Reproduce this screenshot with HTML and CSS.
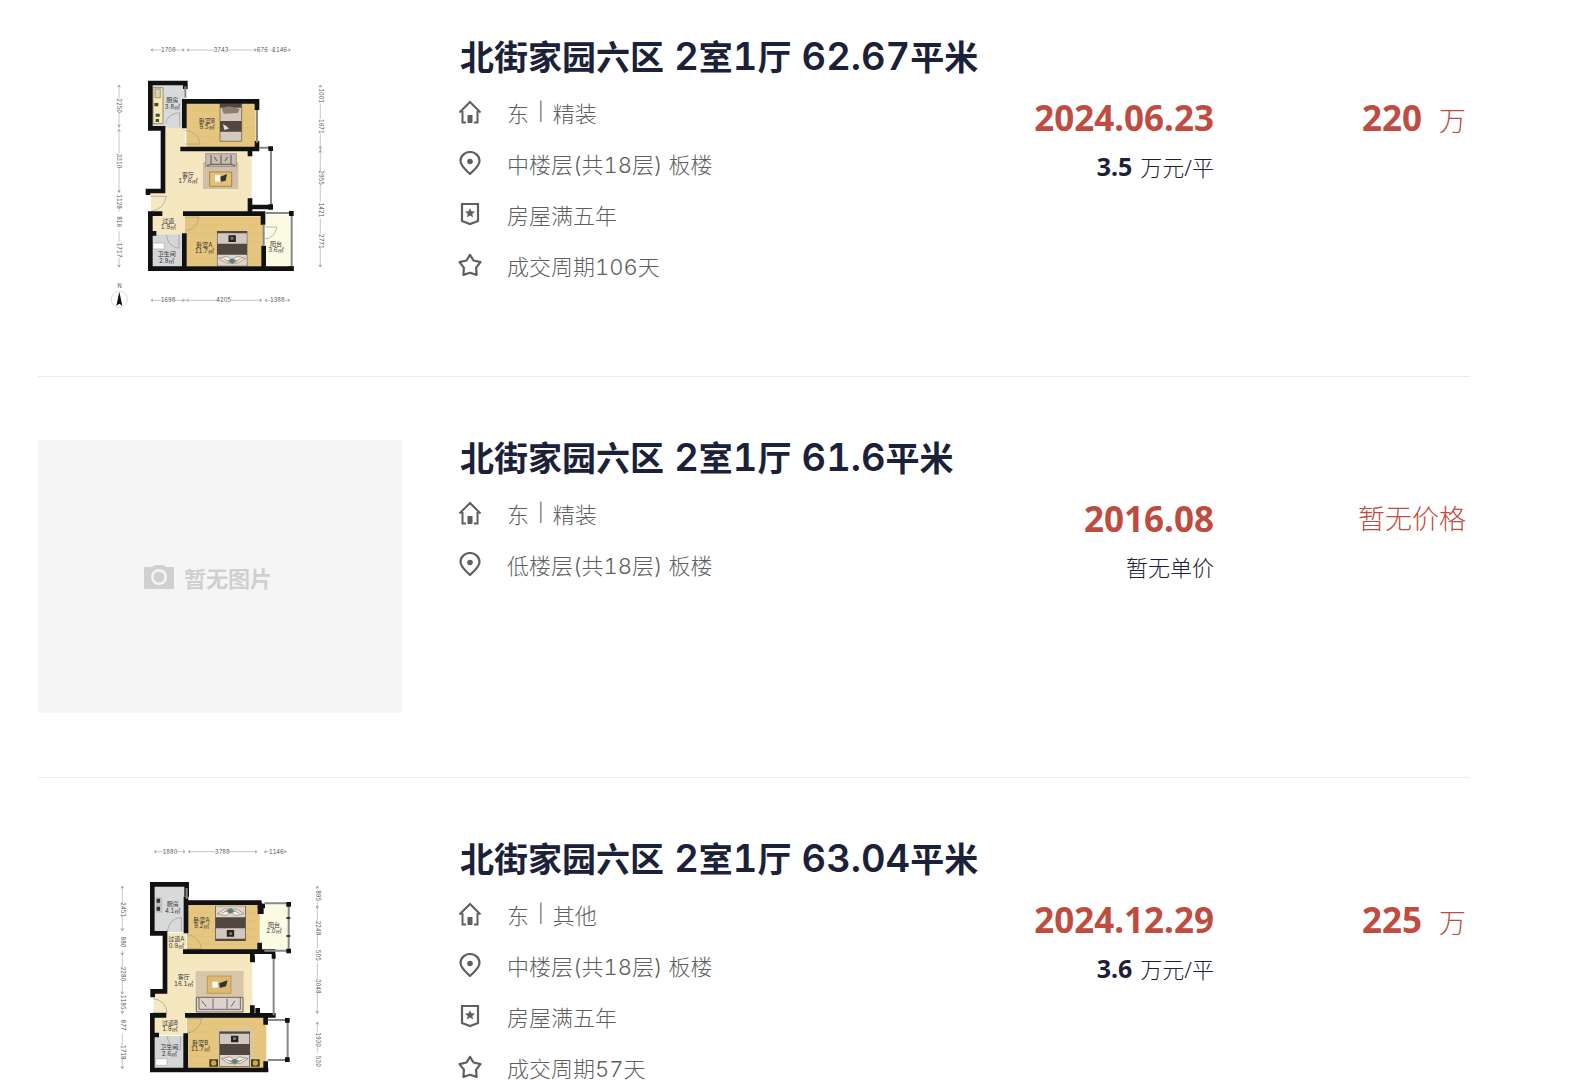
FILE: index.html
```
<!doctype html>
<html lang="zh-CN">
<head>
    <meta charset="UTF-8">
    <meta name="viewport" content="width=device-width, initial-scale=1.0">
    <title>北街家园六区 成交记录</title>
    <link rel="stylesheet" href="styles.css">
</head>
<body>
<!-- shared icons -->
<svg class="defs" aria-hidden="true">
    <symbol id="i-home" viewBox="0 0 24 24">
        <path d="M1.5 12.5 12 2l10.500 10.500M4.500 11v11.500h3.500M19.500 11v11.500H16" fill="none" stroke="currentColor" stroke-width="2"/>
        <path d="M9.500 15h5v8h-5z" fill="currentColor"/>
    </symbol>
    <symbol id="i-pin" viewBox="0 0 24 24">
        <path d="M12 23C8 19 2.500 15 2.500 10a9.500 9 0 0 1 19 0C21.500 15 16 19 12 23z" fill="none" stroke="currentColor" stroke-width="2.200"/>
        <circle cx="12" cy="10.500" r="2.800" fill="currentColor"/>
    </symbol>
    <symbol id="i-badge" viewBox="0 0 24 24">
        <path d="M4 2h16v17l-8 3-8-3z" fill="none" stroke="currentColor" stroke-width="2.200"/>
        <path d="M12 6l1.400 3.300 3.600.3-2.700 2.400.8 3.500-3.100-1.900-3.100 1.900.8-3.500L7 9.600l3.600-.3z" fill="currentColor"/>
    </symbol>
    <symbol id="i-star" viewBox="0 0 24 24">
        <path d="M12 1.800l3.500 5.700 7 1.600-4.400 5.500.5 7.300L12 19.800l-6.600 2.100.5-7.300L1.500 9.100l7-1.600z" fill="none" stroke="currentColor" stroke-width="2.200" stroke-linejoin="round"/>
    </symbol>
    <symbol id="i-bed" viewBox="0 0 92 106">
        <path d="M0 0h92v106H0z" fill="#51473f"/>
        <path d="M2 7h88v31H2z" fill="#d3c8c0"/>
        <path d="M35 13h22v20H35z" fill="#25221f"/>
        <path d="M41 18h9v8h-9z" fill="#777"/>
        <path d="M2 71h88v33H2z" fill="#ddd5cd"/>
        <path d="M6 82l26-6 14 12 14-12 26 6-22 14H28z" fill="#f3eee6" stroke="#85796a" stroke-width="2"/>
        <path d="M12 80l34 20 34-20-34 12z" fill="#b79a5b"/>
        <path d="M35 88l11-6 11 6-11 11z" fill="#547f91"/>
    </symbol>
</svg>

<ul class="list">
    <li class="item">
        <a class="pic" href="#">
            <svg class="plan" viewBox="-201 -108 1092 819" role="img" aria-label="户型图">
                <!-- floors -->
                <path d="M180 155h60v70h200v190H240v62H138V350h42z" fill="#f5e8c1"/>
                <path d="M142 30h96v128h-96z" fill="#d7d9da"/>
                <path d="M144 38h30v108h-30z" fill="#f3e9b4" stroke="#6a6350" stroke-width="2"/>
                <path d="M150 42h16v26h-16z" fill="#ddd4aa" stroke="#777" stroke-width="2"/>
                <path d="M148 84h12v10h-12zM152 116h12v9h-12zM152 132h10v9h-10z" fill="#4b4638"/>
                <path d="M244 84h208v136H244z" fill="#e6c67f"/>
                <path d="M240 424h234v150H240z" fill="#e6c67f"/>
                <path d="M140 478h96v98h-96z" fill="#d3d5d7"/>
                <path d="M144 504h34v18h-34z" fill="#fff" stroke="#aaa" stroke-width="2"/>
                <path d="M482 420h74v156h-74z" fill="#fbfbe4"/>
                <path d="M244 108h208M244 132h208M244 158h208M244 184h208M244 450h230M244 475h230M244 500h230M244 525h230M244 550h230" stroke="#dab76b"/>
                <!-- furniture -->
                <path d="M345 86h65v113h-65z" fill="#d5c8bc" stroke="#5d5147" stroke-width="2"/>
                <path d="M345 86h65v12h-65zM345 138h65v32h-65z" fill="#51473f"/>
                <path d="M350 100l22-6 32 8-6 12-42 2z" fill="#8c7e70"/>
                <path d="M354 148l10 5 8 8-14 4z" fill="#ddd"/>
                <path d="M294 262h106v80H294z" fill="#d0bea6"/>
                <path d="M302 236h92v38h-92z" fill="#c9bdb2" stroke="#81776c" stroke-width="2"/>
                <path d="M318 240v28h60v-28M318 268l-12 4M378 268l12 4M348 240v28M328 246l8 12M368 246l-8 12" fill="none" stroke="#746b66" stroke-width="4"/>
                <path d="M314 291h66v43h-66z" fill="#e1c175" stroke="#8f6b34" stroke-width="2"/>
                <path d="M330 300h16v20h-16z" fill="#faf6ec"/><path d="M346 305l20-8-4 20-14 3z" fill="#353330"/>
                <use href="#i-bed" x="335" y="468" width="93" height="106"/>
                <!-- doors -->
                <g class="door">
                    <path d="M182 146q5-30 42-33v42"/>
                    <path d="M240 166q42 6 45 41h-45"/>
                    <path d="M136 364h48q-6 38-46 45"/>
                    <path d="M240 426h42q-6 38-42 42"/>
                    <path d="M184 478q4 38 38 42v-42"/>
                    <path d="M480 456h36q-8 34-36 36"/>
                </g>
                <!-- walls -->
                <g class="wall">
                    <path d="M241 42V24H136v136h38v188h-45v12"/>
                    <path d="M238 160V79h218v26M456 198v24H226M435 222v22"/>
                    <path d="M129 416h43M136 410v171h430M136 475h18M238 581V475M234 416h240v33M435 370v46M435 396h62M476 512v69"/>
                </g>
                <g class="window">
                    <path d="M241 34v34M456 105v98M462 218h36M498 218v178M482 414h78M560 414v166"/>
                    <path d="M476 450v62"/>
                </g>
                <path d="M490 214h14v14h-14zM490 388h14v16h-14zM552 408h14v15h-14zM552 574h14v14h-14z" fill="#111"/>
                <!-- room names -->
                <g class="room">
                    <text x="202" y="82">厨房</text><text x="202" y="101">3.8㎡</text>
                    <text x="306" y="144">卧室B</text><text x="306" y="163">9.5㎡</text>
                    <text x="249" y="305">客厅</text><text x="249" y="324">17.6㎡</text>
                    <text x="190" y="444">过道</text><text x="190" y="463">1.9㎡</text>
                    <text x="298" y="516">卧室A</text><text x="298" y="535">11.7㎡</text>
                    <text x="185" y="544">卫生间</text><text x="185" y="563">2.9㎡</text>
                    <text x="513" y="512">阳台</text><text x="513" y="531">3.6㎡</text>
                </g>
                <!-- sizes -->
                <g class="rule">
                    <path d="M140-75h30M210-75h26M248-75h80M368-75h84M494-75h10M544-75h12"/>
                    <path d="M140 676h30M208 676h40M252 676h84M376 676h92M482 676h14M538 676h14"/>
                    <path d="M42 32v40M42 112v48M42 166v70M42 278v74M42 400v10M42 470v30M42 548v28"/>
                    <path d="M646 32v6M646 88v44M646 176v112M646 328v52M646 430v48M646 520v56"/>
                </g>
                <g class="size">
                    <text x="190" y="-69">1708</text><text x="348" y="-69">3743</text><text x="472" y="-69">676</text><text x="524" y="-69">1146</text>
                    <text x="189" y="682">1698</text><text x="356" y="682">4205</text><text x="517" y="682">1388</text>
                    <text transform="translate(37 92) rotate(90)">2250</text>
                    <text transform="translate(37 258) rotate(90)">3310</text>
                    <text transform="translate(37 380) rotate(90)">1128</text>
                    <text transform="translate(37 440) rotate(90)">816</text>
                    <text transform="translate(37 525) rotate(90)">1717</text>
                    <text transform="translate(641 62) rotate(90)">1001</text>
                    <text transform="translate(641 154) rotate(90)">1671</text>
                    <text transform="translate(641 308) rotate(90)">2955</text>
                    <text transform="translate(641 405) rotate(90)">1421</text>
                    <text transform="translate(641 499) rotate(90)">2771</text>
                </g>
                <g class="arrow">
                    <path d="M144-79l-6 4 6 4M232-79l6 4-6 4M252-79l-6 4 6 4M448-79l6 4-6 4M502-79l6 4-6 4M550-79l6 4-6 4"/>
                    <path d="M144 672l-6 4 6 4M232 672l6 4-6 4M252 672l-6 4 6 4M464 672l6 4-6 4M486 672l-6 4 6 4M548 672l6 4-6 4"/>
                    <path d="M38 37l4-7 4 7M38 148l4 7 4-7M38 170l4-7 4 7M38 345l4 7 4-7M38 569l4 7 4-7M642 37l4-7 4 7M642 214l4 7 4-7M642 233l4-7 4 7M642 569l4 7 4-7"/>
                </g>
                <circle cx="43" cy="673" r="24" fill="#fff" stroke="#ccc" stroke-width="2"/>
                <path d="M43 650l9 42-9-6-9 6z" fill="#111"/>
                <g class="size"><text x="44" y="639">N</text></g>
            </svg>
        </a>
        <div class="info">
            <h2 class="title"><a href="#">北街家园六区<span> 2</span>室<span>1</span>厅<span> 62.67</span>平米</a></h2>
            <p class="row"><svg><use href="#i-home"/></svg>东<span class="sep">|</span>精装</p>
            <p class="row"><svg><use href="#i-pin"/></svg>中楼层(共18层) 板楼</p>
            <p class="row"><svg><use href="#i-badge"/></svg>房屋满五年</p>
            <p class="row"><svg><use href="#i-star"/></svg>成交周期106天</p>
        </div>
        <div class="deal">
            <p class="date">2024.06.23</p>
            <p class="unit"><b>3.5</b>万元/平</p>
        </div>
        <p class="price"><b>220</b>万</p>
    </li>

    <li class="item">
        <a class="pic empty" href="#">
            <svg viewBox="0 0 30 24"><path fill-rule="evenodd" d="M0 2h8l3-2h8l3 2h8v22H0zM15 4a8 8 0 1 0 0 16 8 8 0 0 0 0-16zm0 2.500a5.500 5.500 0 1 1 0 11 5.500 5.500 0 0 1 0-11z" fill="currentColor"/></svg>
            <span>暂无图片</span>
        </a>
        <div class="info">
            <h2 class="title"><a href="#">北街家园六区<span> 2</span>室<span>1</span>厅<span> 61.6</span>平米</a></h2>
            <p class="row"><svg><use href="#i-home"/></svg>东<span class="sep">|</span>精装</p>
            <p class="row"><svg><use href="#i-pin"/></svg>低楼层(共18层) 板楼</p>
        </div>
        <div class="deal">
            <p class="date">2016.08</p>
            <p class="unit">暂无单价</p>
        </div>
        <p class="price">暂无价格</p>
    </li>

    <li class="item">
        <a class="pic" href="#">
            <svg class="plan" viewBox="-201 -117 1092 819" role="img" aria-label="户型图">
                <!-- floors -->
                <path d="M186 158h58v58h198v186H244v64h-98V340h40z" fill="#f5e8c1"/>
                <path d="M150 20h90v136h-90z" fill="#d7d9da"/>
                <path d="M152 52h20v46h-20z" fill="#bcbfc2"/><path d="M155 56h10v12h-10zM155 80h10v12h-10z" fill="#333"/>
                <path d="M246 74h218v136H246z" fill="#e6c67f"/>
                <path d="M246 408h238v156H246z" fill="#e6c67f"/>
                <path d="M148 468h94v96h-94z" fill="#d3d5d7"/>
                <path d="M152 536h34v20h-34z" fill="#fff" stroke="#aaa" stroke-width="2"/>
                <path d="M466 74h82v138h-82z" fill="#fbfbe4"/>
                <path d="M246 98h218M246 122h218M246 146h218M246 170h218M246 194h218M246 432h238M246 456h238M246 480h238M246 504h238M246 528h238M246 550h238" stroke="#dab76b"/>
                <!-- furniture -->
                <use href="#i-bed" x="331" y="77" width="93" height="106" transform="rotate(180 377 130)"/>
                <path d="M334 444h112v118H334z" fill="#d9c79c"/>
                <use href="#i-bed" x="342" y="454" width="94" height="106"/>
                <path d="M313 538h26v22h-26zM438 538h26v22h-26z" fill="#493824"/>
                <circle cx="326" cy="549" r="8" fill="#c6ac45"/><circle cx="451" cy="549" r="8" fill="#c6ac45"/>
                <path d="M272 273h144v120H272z" fill="#d8c6a9"/>
                <path d="M307 288h71v52h-71z" fill="#deba70" stroke="#ae8746" stroke-width="2"/>
                <path d="M322 305h16v18h-16z" fill="#fff"/><path d="M342 310l26-9-5 18-18 5z" fill="#353330"/>
                <path d="M274 352h140v44H274z" fill="#ddd3ce" stroke="#716862" stroke-width="3"/>
                <path d="M282 352v36h124v-36M324 356v30M366 356v30M290 362l14 18M390 362l-12 18" fill="none" stroke="#716862" stroke-width="3"/>
                <!-- doors -->
                <g class="door">
                    <path d="M187 154q5-38 42-42v42"/>
                    <path d="M244 162q40 8 46 44h-46"/>
                    <path d="M144 356q38 4 42 42h-42"/>
                    <path d="M244 416h46q-6 38-46 44"/>
                    <path d="M186 468q6 38 40 42v-42"/>
                </g>
                <!-- walls -->
                <g class="wall">
                    <path d="M245 50V13H142v147h38v174h-37v18"/>
                    <path d="M243 50v110M243 68h227M458 78h22M466 70v30M464 188v26M234 215h277M442 212v34"/>
                    <path d="M136 406h48M142 400v170h348M142 465h20M242 570V460M240 406h272M442 376v30M458 384v22M482 406v28M482 544v26"/>
                </g>
                <g class="window">
                    <path d="M245 24v32M478 70h72M551 70v142M478 212h72M506 226v180"/>
                    <path d="M488 420h58M548 420v120M488 540h58"/>
                </g>
                <path d="M544 66h14v14h-14zM544 206h14v14h-14zM544 112h12v4h-12zM544 166h12v4h-12zM500 222h12v14h-12zM540 414h14v14h-14zM540 532h14v14h-14zM436 230h14v17h-14zM458 78h18v24h-18z" fill="#111"/>
                <!-- room names -->
                <g class="room">
                    <text x="203" y="79">厨房</text><text x="203" y="98">4.1㎡</text>
                    <text x="290" y="125">卧室A</text><text x="290" y="144">9.2㎡</text>
                    <text x="214" y="184">过道A</text><text x="214" y="203">0.9㎡</text>
                    <text x="507" y="141">阳台</text><text x="507" y="160">2.0㎡</text>
                    <text x="236" y="298">客厅</text><text x="236" y="317">16.1㎡</text>
                    <text x="195" y="435">过道B</text><text x="195" y="454">1.9㎡</text>
                    <text x="286" y="494">卧室B</text><text x="286" y="513">11.7㎡</text>
                    <text x="193" y="508">卫生间</text><text x="193" y="527">2.6㎡</text>
                </g>
                <!-- sizes -->
                <g class="rule">
                    <path d="M150-85h26M214-85h24M252-85h80M372-85h82M480-85h14M534-85h8"/>
                    <path d="M52 20v50M52 108v42M52 212v50M52 302v36M52 388v10M52 460v36M52 536v28"/>
                    <path d="M637 20v8M637 66v58M637 164v40M637 248v50M637 340v60M637 428v30M637 500v18"/>
                </g>
                <g class="size">
                    <text x="195" y="-79">1880</text><text x="352" y="-79">3788</text><text x="514" y="-79">1146</text>
                    <text transform="translate(47 89) rotate(90)">2451</text>
                    <text transform="translate(47 186) rotate(90)">880</text>
                    <text transform="translate(47 282) rotate(90)">2280</text>
                    <text transform="translate(47 367) rotate(90)">1185</text>
                    <text transform="translate(47 435) rotate(90)">877</text>
                    <text transform="translate(47 517) rotate(90)">1718</text>
                    <text transform="translate(632 47) rotate(90)">895</text>
                    <text transform="translate(632 144) rotate(90)">2248</text>
                    <text transform="translate(632 226) rotate(90)">505</text>
                    <text transform="translate(632 319) rotate(90)">3048</text>
                    <text transform="translate(632 479) rotate(90)">1930</text>
                    <text transform="translate(632 544) rotate(90)">530</text>
                </g>
                <g class="arrow">
                    <path d="M154-89l-6 4 6 4M234-89l6 4-6 4M256-89l-6 4 6 4M450-89l6 4-6 4M484-89l-6 4 6 4M538-89l6 4-6 4"/>
                    <path d="M48 25l4-7 4 7M48 145l4 7 4-7M48 218l4 7 4-7M48 335l4 7 4-7M48 393l4 7 4-7M48 559l4 7 4-7M633 25l4-7 4 7M633 78l4 7 4-7M633 393l4 7 4-7M633 433l4-7 4 7"/>
                </g>
            </svg>
        </a>
        <div class="info">
            <h2 class="title"><a href="#">北街家园六区<span> 2</span>室<span>1</span>厅<span> 63.04</span>平米</a></h2>
            <p class="row"><svg><use href="#i-home"/></svg>东<span class="sep">|</span>其他</p>
            <p class="row"><svg><use href="#i-pin"/></svg>中楼层(共18层) 板楼</p>
            <p class="row"><svg><use href="#i-badge"/></svg>房屋满五年</p>
            <p class="row"><svg><use href="#i-star"/></svg>成交周期57天</p>
        </div>
        <div class="deal">
            <p class="date">2024.12.29</p>
            <p class="unit"><b>3.6</b>万元/平</p>
        </div>
        <p class="price"><b>225</b>万</p>
    </li>
</ul>
</body>
</html>
```
FILE: styles.css
```
*{
    padding: 0;
    margin: 0;
    box-sizing: border-box;
}
body{
    height: 100vh;
    overflow: hidden;
    background: #fff;
    color: #1b2138;
    font-family: Inter, "Noto Sans CJK SC", sans-serif;
    font-variant-numeric: tabular-nums;
}
a{
    color: inherit;
    text-decoration: none;
}
.defs{
    position: absolute;
    width: 0;
    height: 0;
}

.list{
    list-style: none;
    margin: 0 124px 0 38px;
}
.item{
    display: grid;
    grid-template-columns: 364px 1fr auto 252px;
    padding: 63px 4px 64px 0;
    border-bottom: 1px solid #ececec;
}
.item:first-child{
    padding-top: 39px;
}

.pic{
    display: block;
    height: 273px;
}
.plan{
    display: block;
    width: 100%;
    height: 100%;
}
.empty{
    display: flex;
    align-items: center;
    justify-content: center;
    gap: 10px;
    padding-right: 24px;
    background: #f5f5f5;
    color: #cfd0d0;
    font-size: 22px;
    font-weight: bold;
}
.empty svg{
    width: 30px;
    height: 24px;
}

.info{
    padding-left: 56px;
}
.title{
    height: 47px;
    margin-left: 2px;
    font-size: 34px;
    line-height: 34px;
    font-weight: 600;
    white-space: nowrap;
}
.title span{
    font-size: 38px;
}
.row{
    display: flex;
    align-items: center;
    height: 51px;
    font-size: 22px;
    font-weight: 300;
    color: #5f5f5f;
}
.row svg{
    width: 24px;
    height: 24px;
    margin-right: 25px;
}
.sep{
    margin: 0 9px;
    font-size: 18px;
}

.deal,
.price{
    padding-top: 59px;
    text-align: right;
    font-family: "Noto Sans", "Noto Sans CJK SC", sans-serif;
}
.date{
    font-size: 35px;
    line-height: 40px;
    font-weight: bold;
    color: #bf4c40;
}
.unit{
    margin-top: 10px;
    font-size: 22px;
    line-height: 36px;
    font-weight: 300;
}
.unit b{
    margin-right: 8px;
    font-size: 25px;
    font-weight: bold;
}
.price{
    font-size: 27px;
    line-height: 40px;
    font-weight: 300;
    color: #bf4c40;
}
.price b{
    margin-right: 17px;
    font-size: 35px;
    font-weight: bold;
}

/* floor plan */
.wall{
    fill: none;
    stroke: #111;
    stroke-width: 14;
}
.window{
    fill: none;
    stroke: #85898c;
    stroke-width: 6;
}
.door{
    fill: none;
    stroke: #9b9a8c;
    stroke-width: 2;
}
.rule,
.arrow{
    fill: none;
    stroke: #aaa;
    stroke-width: 2;
}
.arrow{
    stroke: #777;
}
.room,
.size{
    font-size: 18px;
    fill: #333;
    text-anchor: middle;
}
.size{
    font-size: 17px;
    fill: #555;
}
```
